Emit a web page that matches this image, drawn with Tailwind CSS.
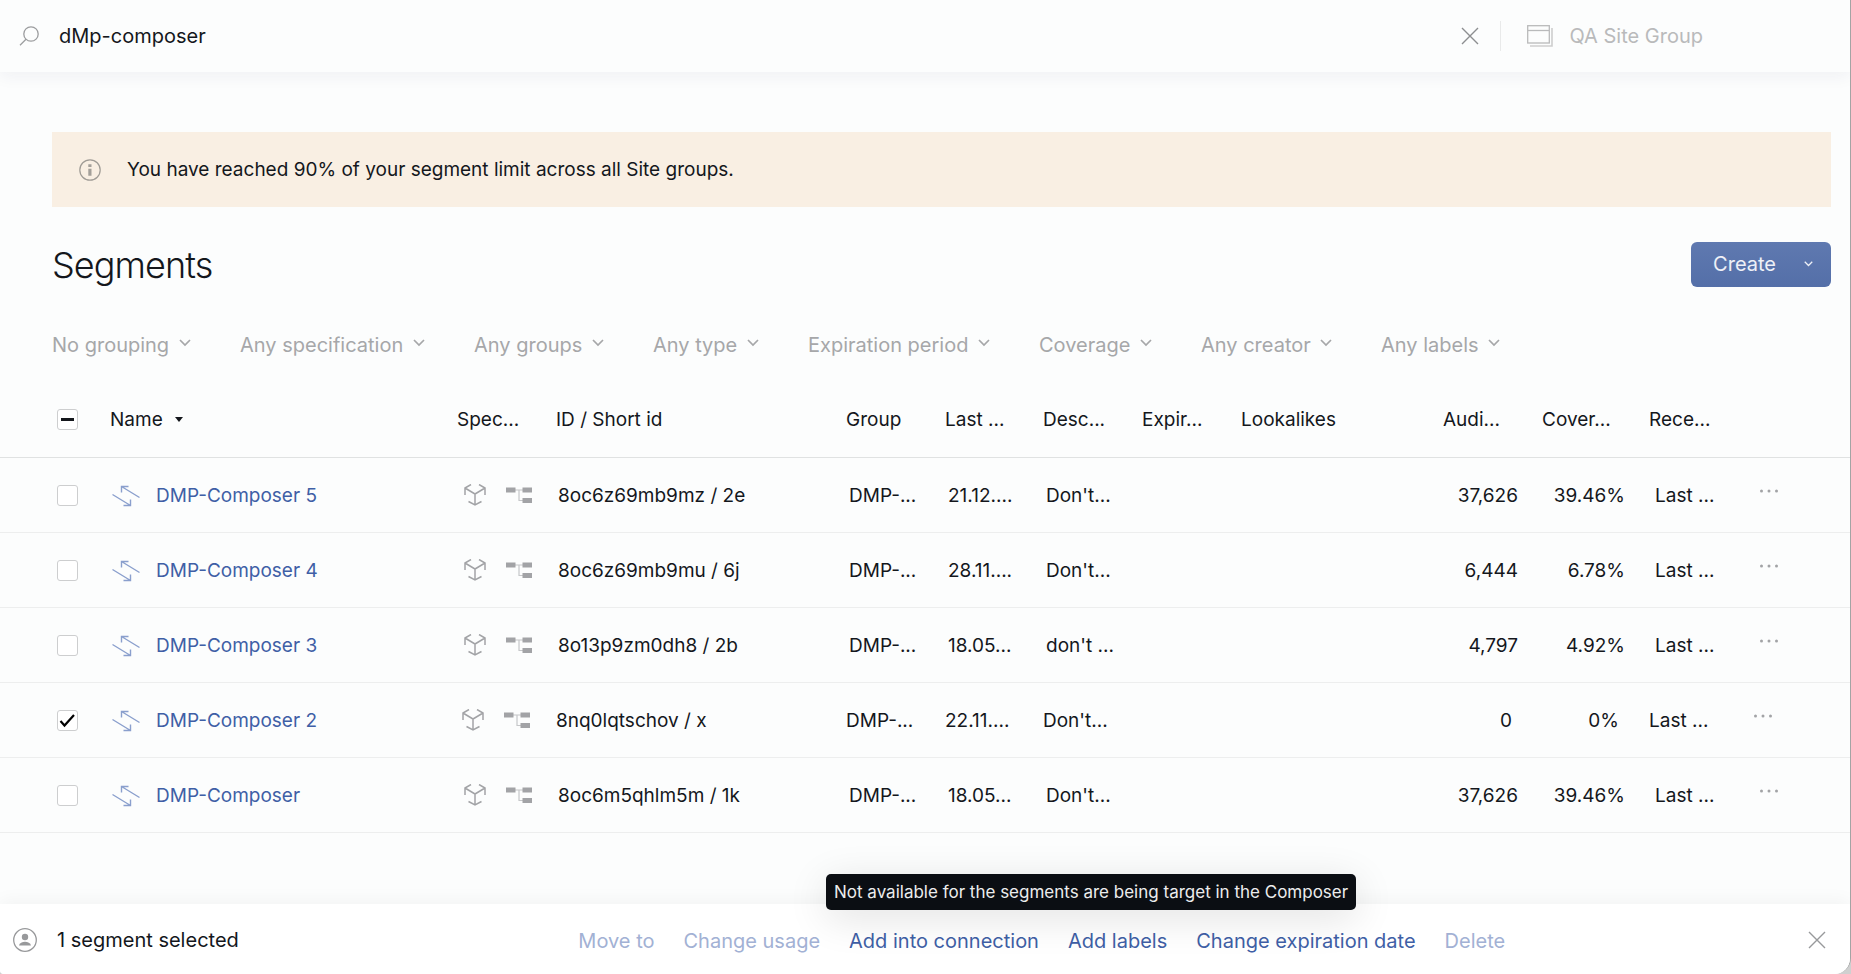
<!DOCTYPE html>
<html lang="en">
<head>
    <meta charset="UTF-8">
    <meta name="viewport" content="width=device-width, initial-scale=1.0">
    <title>Segments</title>
    <script src="https://cdn.jsdelivr.net/npm/@tailwindcss/browser@4"></script>
</head>
<body class="bg-[#cfd0d0] font-['Inter',sans-serif] text-[19px] leading-6 text-[#14171c]">
    <!-- Shared icons -->
    <svg class="hidden">
        <symbol id="chevron" viewBox="0 0 12 8"><path d="M1 1l5 5 5-5" fill="none" stroke="currentColor" stroke-width="1.7" /></symbol>
        <symbol id="close" viewBox="0 0 18 18"><path d="M1 1l16 16M17 1L1 17" fill="none" stroke="currentColor" stroke-width="1.4" /></symbol>
        <symbol id="arrows" viewBox="0 0 28 22"><path d="M0.500 9.500L18.500 20.500M11.500 20.500h7v-6M27.500 12.500L9.500 1.500M9.500 7.500v-6h7" fill="none" stroke="currentColor" stroke-width="1.400" /></symbol>
        <symbol id="cube" viewBox="0 0 22 22"><path d="M11 21V10M11 10L1 4M11 10l10-6M1 11V4l6-3.500M21 11V4l-6-3.500M4.500 17.500L11 21l6.500-3.500" fill="none" stroke="currentColor" stroke-width="1.500" /></symbol>
        <symbol id="tree" viewBox="0 0 26 17"><path d="M9 3h8M13 3v10.500h4" fill="none" stroke="currentColor" stroke-width="1.200" opacity=".6" /><path d="M0 .5h9.500v5H0zM16.500 .5H26v5h-9.500zM16.500 11H26v5h-9.500z" fill="currentColor" /></symbol>
        <symbol id="dots" viewBox="0 0 18 4"><circle cx="1.500" cy="2" r="1.500" /><circle cx="9" cy="2" r="1.500" /><circle cx="16.500" cy="2" r="1.500" /></symbol>
    </svg>

    <div class="flex min-h-screen flex-col overflow-hidden rounded-bl-sm rounded-br-2xl border-r border-[#a3a4a4] bg-[#fcfdfd]">
        <!-- Search bar -->
        <header class="flex h-[72px] items-center pr-[147px] pl-[19px] shadow-[0_4px_16px_rgba(30,35,90,0.06)]">
            <svg class="size-5 shrink-0 text-[#9c9d9f]" viewBox="0 0 20 20" fill="none" stroke="currentColor" stroke-width="1.3"><circle cx="12" cy="8" r="7.200" /><path d="M7 13.200L1 19.300" /></svg>
            <input type="text" value="dMp-composer" aria-label="Search segments" class="ml-5 min-w-0 flex-1 bg-transparent text-xl outline-none">
            <button aria-label="Clear search" class="text-[#8d8e90]"><svg class="size-[18px]"><use href="#close" /></svg></button>
            <div class="ml-[21px] h-[30px] w-px bg-[#e9eaea]"></div>
            <button class="ml-[26px] flex items-center gap-4 text-xl text-[#b9babb]">
                <svg class="h-[22px] w-[26px]" viewBox="0 0 26 22" fill="none" stroke="currentColor"><rect x=".7" y=".7" width="21.600" height="17.300" stroke-width="1.300" /><path d="M1 5.500h21" stroke-width="1.300" /><path d="M25 3v18H3" stroke-width="1.600" opacity=".7" /></svg>
                QA Site Group
            </button>
        </header>

        <main class="pt-[60px]">
            <div class="mr-[19px] ml-[52px] flex h-[75px] items-center gap-[26px] bg-[#f9efe3] pt-px pl-[27px]">
                <svg class="size-[22px]" viewBox="0 0 22 22"><circle cx="11" cy="11" r="10.200" fill="none" stroke="#9f9b95" stroke-width="1.200" /><path d="M9.300 5.300h3.200v2.800H9.300zM9.300 9.800h3.200v7H9.300z" fill="#a39f99" /></svg>
                <p>You have reached 90% of your segment limit across all Site groups.</p>
            </div>

            <div class="mt-[35px] mr-[19px] ml-[52px] flex h-[45px] items-center justify-between">
                <h1 class="text-[36px] font-light tracking-tight">Segments</h1>
                <button class="flex h-[45px] items-center gap-7 rounded-md bg-linear-to-b from-[#5f79b0] to-[#546fa8] pr-[18px] pb-[2px] pl-[22px] text-xl text-white/90">
                    Create
                    <svg class="h-[6px] w-[9px]"><use href="#chevron" /></svg>
                </button>
            </div>

            <div id="filters" class="mt-11 ml-[52px] flex gap-[49px] text-xl text-[#a6a7a9]"></div>

            <table class="mt-[22px] w-full min-w-[1400px] table-fixed whitespace-nowrap">
                <colgroup>
                    <col class="w-[110px]"><col><col class="w-[99px]"><col class="w-[290px]"><col class="w-[99px]"><col class="w-[98px]"><col class="w-[99px]"><col class="w-[99px]"><col class="w-[202px]"><col class="w-[99px]"><col class="w-[107px]"><col class="w-[99px]"><col class="w-[102px]">
                </colgroup>
                <thead>
                    <tr class="h-[76px] border-b border-[#e0e2e2] text-left [&>th]:pt-[2px] [&>th]:font-normal">
                        <th class="pl-[57px]">
                            <span class="relative flex size-[21px]">
                                <input type="checkbox" aria-label="Select all segments" class="size-full appearance-none rounded-[3px] border border-[#cdcecf] bg-white">
                                <span class="pointer-events-none absolute top-[9px] left-1 h-[3px] w-[13px] bg-[#14171c]"></span>
                            </span>
                        </th>
                        <th><button class="flex items-center gap-3">Name <svg class="h-[5px] w-2" viewBox="0 0 8 5"><path d="M0 0h8L4 5z" fill="currentColor" /></svg></button></th>
                        <th>Spec...</th>
                        <th>ID / Short id</th>
                        <th>Group</th>
                        <th>Last ...</th>
                        <th>Desc...</th>
                        <th>Expir...</th>
                        <th>Lookalikes</th>
                        <th>Audi...</th>
                        <th>Cover...</th>
                        <th>Rece...</th>
                        <th></th>
                    </tr>
                </thead>
                <tbody id="segments"></tbody>
            </table>
        </main>

        <!-- Selection bar -->
        <footer class="relative mt-auto flex h-[70px] items-center bg-white pt-[2px] pr-6 pl-[13px] shadow-[0_-4px_16px_rgba(20,25,35,0.04)]">
            <svg class="size-6 text-[#98999b]" viewBox="0 0 24 24"><circle cx="12" cy="12" r="11.300" fill="none" stroke="currentColor" stroke-width="1.300" /><circle cx="12" cy="9" r="3.200" fill="currentColor" /><path d="M6 17.500c1-5 11-5 12 0z" fill="currentColor" /></svg>
            <p class="ml-5 flex-[13] text-xl">1 segment selected</p>
            <div class="flex gap-[29px] pt-[2px] text-xl text-[#3f5fa6]">
                <button class="text-[#a2b1d4]" disabled>Move to</button>
                <button class="text-[#a2b1d4]" disabled>Change usage</button>
                <button>Add into connection</button>
                <button>Add labels</button>
                <button>Change expiration date</button>
                <button class="text-[#a2b1d4]" disabled>Delete</button>
            </div>
            <div class="flex flex-[8] justify-end">
                <button aria-label="Clear selection" class="text-[#98999b]"><svg class="size-[18px]"><use href="#close" /></svg></button>
            </div>
            <div role="tooltip" class="absolute bottom-16 left-[826px] flex h-9 items-center rounded-[5px] bg-[#0b0e13] px-2 text-[17px] whitespace-nowrap text-[#ececed] shadow-[0_8px_40px_rgba(0,0,0,0.12)]">Not available for the segments are being target in the Composer</div>
        </footer>
    </div>

    <script>
        const filters = ['No grouping', 'Any specification', 'Any groups', 'Any type', 'Expiration period', 'Coverage', 'Any creator', 'Any labels'];

        const segments = [
            { name: 'DMP-Composer 5', id: '8oc6z69mb9mz / 2e', last: '21.12....', desc: "Don't...", audience: '37,626', coverage: '39.46%' },
            { name: 'DMP-Composer 4', id: '8oc6z69mb9mu / 6j', last: '28.11....', desc: "Don't...", audience: '6,444', coverage: '6.78%' },
            { name: 'DMP-Composer 3', id: '8o13p9zm0dh8 / 2b', last: '18.05...', desc: "don't ...", audience: '4,797', coverage: '4.92%' },
            { name: 'DMP-Composer 2', id: '8nq0lqtschov / x', last: '22.11....', desc: "Don't...", audience: '0', coverage: '0%', checked: true },
            { name: 'DMP-Composer', id: '8oc6m5qhlm5m / 1k', last: '18.05...', desc: "Don't...", audience: '37,626', coverage: '39.46%' }
        ];

        document.getElementById('filters').innerHTML = filters.map(f => `
            <label class="flex items-center gap-[9px]">
                <select aria-label="${f}" class="appearance-none bg-transparent outline-none"><option>${f}</option></select>
                <svg class="mb-1 h-2 w-3"><use href="#chevron" /></svg>
            </label>`).join('');

        document.getElementById('segments').innerHTML = segments.map(s => {
            // the selected row sits tighter to the left
            const start = s.checked ? 'pl-0' : 'pl-[2px]';
            const text = s.checked ? 'pl-0' : 'pl-[3px]';
            const number = s.checked ? 'pr-[30px] text-right' : 'pr-6 text-right';
            const end = s.checked ? 'pl-0' : 'pl-[6px]';
            return `
            <tr class="h-[75px] border-b border-[#edeeee] [&>td]:pt-[2px]">
                <td class="pl-[57px]">
                    <span class="relative flex size-[21px]">
                        <input type="checkbox" aria-label="Select ${s.name}" ${s.checked ? 'checked' : ''} class="peer size-full appearance-none rounded-[3px] border border-[#cdcecf] bg-white">
                        <svg class="pointer-events-none absolute inset-0 hidden size-full peer-checked:block" viewBox="0 0 21 21"><path d="M3.500 11l4 4.500L17 5" fill="none" stroke="#000" stroke-width="2.200" /></svg>
                    </span>
                </td>
                <td><a href="#" class="flex items-center gap-4 pl-[2px] text-[#3f5fa6]"><svg class="h-[22px] w-7 text-[#8a9fcd]"><use href="#arrows" /></svg>${s.name}</a></td>
                <td class="${start}"><span class="mb-[2px] flex gap-5 pl-[5px] text-[#a2a3a6]"><svg class="size-[22px]"><use href="#cube" /></svg><svg class="mt-[3px] h-[17px] w-[26px]"><use href="#tree" /></svg></span></td>
                <td class="${start}">${s.id}</td>
                <td class="${text}">DMP-...</td>
                <td class="${text}">${s.last}</td>
                <td class="${text}">${s.desc}</td>
                <td></td>
                <td></td>
                <td class="${number}">${s.audience}</td>
                <td class="${number}">${s.coverage}</td>
                <td class="${end}">Last ...</td>
                <td class="${end}"><button aria-label="More actions for ${s.name}" class="mb-[10px] block px-[6px] py-1 text-[#a2a3a6]"><svg class="h-1 w-[18px]" fill="currentColor"><use href="#dots" /></svg></button></td>
            </tr>`;
        }).join('');
    </script>
</body>
</html>
